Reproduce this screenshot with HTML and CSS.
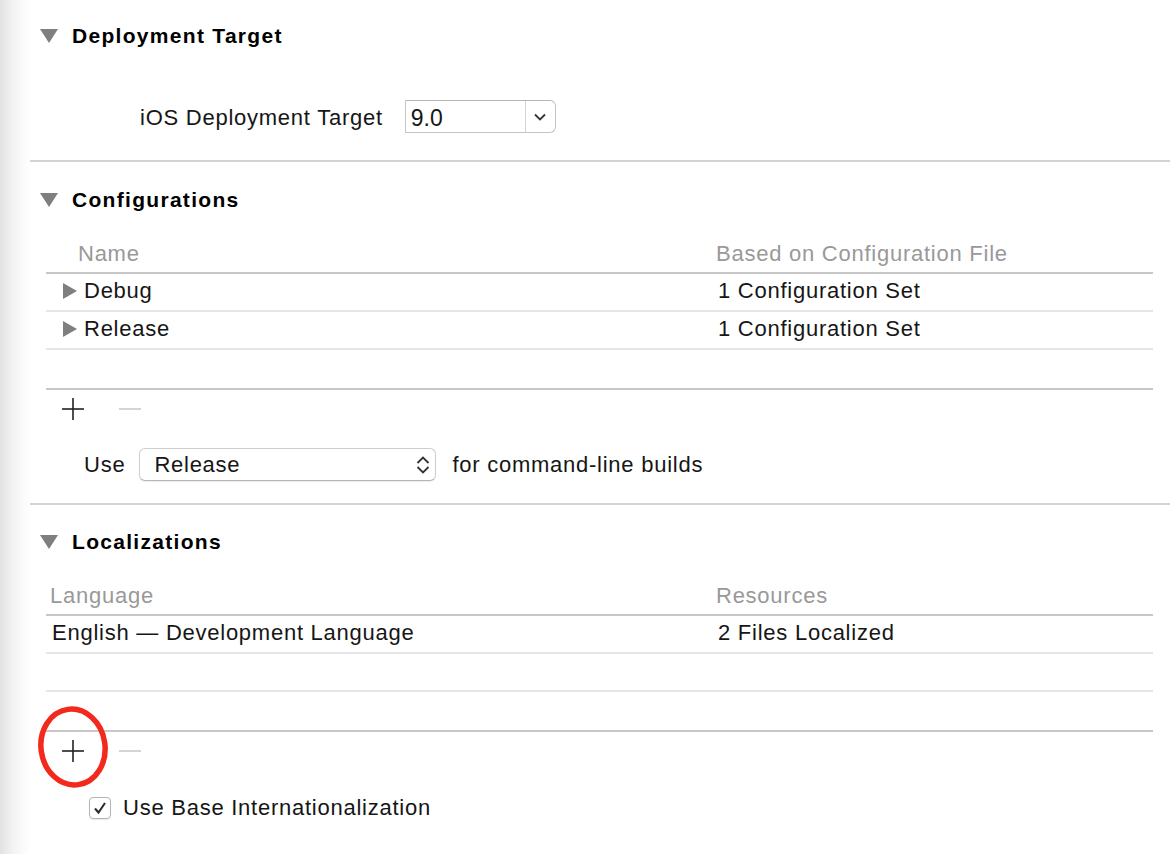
FILE: index.html
```html
<!DOCTYPE html>
<html>

<head>
    <meta charset="utf-8">
    <title>Project Info</title>
    <link rel="stylesheet" href="styles.css">
</head>

<body>
    <div class="page">
        <section class="group group-target">
            <h2 class="group-title">
                <svg class="disclosure" width="18" height="14" viewBox="0 0 18 14"><polygon points="0,0 18,0 9,14" /></svg>
                Deployment Target
            </h2>
            <div class="target-row">
                <span class="field-label">iOS Deployment Target</span>
                <div class="combo">
                    <span class="combo-value">9.0</span>
                    <span class="combo-button">
                        <svg width="12" height="8" viewBox="0 0 12 8"><polyline points="1,1.5 6,6.5 11,1.5" /></svg>
                    </span>
                </div>
            </div>
        </section>

        <section class="group group-configs">
            <h2 class="group-title">
                <svg class="disclosure" width="18" height="14" viewBox="0 0 18 14"><polygon points="0,0 18,0 9,14" /></svg>
                Configurations
            </h2>
            <div class="table">
                <div class="table-head">
                    <span class="col-main col-indent">Name</span>
                    <span class="col-side">Based on Configuration File</span>
                </div>
                <div class="table-row">
                    <span class="col-main col-arrow">
                        <svg class="row-arrow" width="14" height="16" viewBox="0 0 14 16"><polygon points="0,0 14,8 0,16" /></svg>
                        Debug
                    </span>
                    <span class="col-side">1 Configuration Set</span>
                </div>
                <div class="table-row">
                    <span class="col-main col-arrow">
                        <svg class="row-arrow" width="14" height="16" viewBox="0 0 14 16"><polygon points="0,0 14,8 0,16" /></svg>
                        Release
                    </span>
                    <span class="col-side">1 Configuration Set</span>
                </div>
                <div class="table-row table-row-last"></div>
            </div>
            <div class="toolbar">
                <svg class="plus" width="22" height="22" viewBox="0 0 22 22"><line x1="11" y1="0" x2="11" y2="22" /><line x1="0" y1="11" x2="22" y2="11" /></svg>
                <span class="minus"></span>
            </div>
            <div class="use-row">
                <span>Use</span>
                <div class="popup">
                    <span>Release</span>
                    <svg class="updown" width="14" height="18" viewBox="0 0 14 18"><polyline points="1.5,7 7,1.5 12.5,7" /><polyline points="1.5,11 7,16.5 12.5,11" /></svg>
                </div>
                <span>for command-line builds</span>
            </div>
        </section>

        <section class="group group-locales">
            <h2 class="group-title">
                <svg class="disclosure" width="18" height="14" viewBox="0 0 18 14"><polygon points="0,0 18,0 9,14" /></svg>
                Localizations
            </h2>
            <div class="table">
                <div class="table-head">
                    <span class="col-main">Language</span>
                    <span class="col-side">Resources</span>
                </div>
                <div class="table-row">
                    <span class="col-main">English — Development Language</span>
                    <span class="col-side">2 Files Localized</span>
                </div>
                <div class="table-row"></div>
                <div class="table-row table-row-last"></div>
            </div>
            <div class="toolbar">
                <svg class="plus" width="22" height="22" viewBox="0 0 22 22"><line x1="11" y1="0" x2="11" y2="22" /><line x1="0" y1="11" x2="22" y2="11" /></svg>
                <span class="minus"></span>
                <svg class="mark" width="74" height="86" viewBox="0 0 74 86"><ellipse cx="37" cy="43" rx="32" ry="38" transform="rotate(-8 37 43)" /></svg>
            </div>
            <label class="check-row">
                <span class="checkbox">
                    <svg width="16" height="16" viewBox="0 0 16 16"><polyline points="3,8.5 6.5,12.5 13,3" /></svg>
                </span>
                Use Base Internationalization
            </label>
        </section>
    </div>
</body>

</html>
```

FILE: styles.css
```css
body {
    margin: 0;
    min-height: 100vh;
    background: linear-gradient(90deg, #e2e2e2 0, #f2f2f2 12px, #fff 30px);
    color: #161616;
    font-family: "Liberation Sans", Arial, sans-serif;
    font-size: 22px;
    letter-spacing: 0.75px;
}

.page {
    padding: 0 4px 0 30px;
}

.group {
    border-top: 2px solid #d3d3d3;
}

.group-target {
    border-top: none;
    padding: 24px 0 27px;
}

.group-configs {
    padding: 26px 0 22px;
}

.group-locales {
    padding: 25px 0 30px;
}

.group-title {
    display: flex;
    align-items: center;
    margin: 0;
    height: 24px;
    padding-left: 10px;
    font-size: 21px;
    font-weight: bold;
    letter-spacing: 1.3px;
    color: #000;
}

.disclosure {
    fill: #7f7f7f;
    margin-right: 14px;
}

.target-row {
    display: flex;
    align-items: center;
    margin-top: 52px;
    padding-left: 110px;
    height: 33px;
}

.field-label {
    margin-right: 22px;
    padding-top: 3px;
}

.combo {
    display: flex;
    height: 33px;
    box-sizing: border-box;
    width: 151px;
    border: 1px solid #c4c4c4;
    border-top-color: #b4b4b4;
    border-radius: 0 6px 6px 0;
}

.combo-value {
    flex: 1;
    padding-left: 5px;
    line-height: 35px;
    font-size: 23px;
    letter-spacing: 0;
}

.combo-button {
    display: flex;
    align-items: center;
    justify-content: center;
    width: 29px;
    border-left: 1px solid #d4d4d4;
}

.combo-button polyline,
.updown polyline {
    fill: none;
    stroke: #333;
    stroke-width: 1.8;
}

.table {
    margin: 24px 17px 0 16px;
    border-bottom: 2px solid #c8c8c8;
}

.table-head {
    display: flex;
    align-items: center;
    height: 36px;
    border-bottom: 2px solid #c8c8c8;
    color: #999;
}

.table-row {
    display: flex;
    align-items: center;
    height: 34px;
    padding-bottom: 2px;
    border-bottom: 2px solid #e6e6e6;
}

.table-row-last {
    height: 38px;
    padding-bottom: 0;
    border-bottom: none;
}

.col-main {
    display: flex;
    align-items: center;
    width: 666px;
    box-sizing: border-box;
    padding-left: 4px;
}

.table-row .col-main {
    padding-left: 6px;
}

.table-head .col-indent {
    padding-left: 32px;
}

.table-row .col-arrow {
    padding-left: 17px;
}

.row-arrow {
    fill: #7f7f7f;
    margin-right: 7px;
}

.col-side {
    padding-left: 4px;
}

.table-row .col-side {
    padding-left: 6px;
}

.toolbar {
    position: relative;
    display: flex;
    align-items: center;
    height: 38px;
    margin-left: 16px;
    padding-left: 16px;
}

.plus line {
    stroke: #222;
    stroke-width: 1.6;
}

.minus {
    width: 22px;
    height: 2px;
    margin-left: 35px;
    background-color: #d4d4d4;
}

.mark {
    position: absolute;
    left: -10px;
    top: -28px;
}

.mark ellipse {
    fill: none;
    stroke: #f4291d;
    stroke-width: 5.5;
}

.use-row {
    display: flex;
    align-items: center;
    margin-top: 20px;
    padding-left: 54px;
    height: 33px;
}

.popup {
    display: flex;
    align-items: center;
    justify-content: space-between;
    box-sizing: border-box;
    width: 297px;
    height: 33px;
    margin: 0 16px 0 14px;
    padding: 0 5px 0 14px;
    border: 1px solid #cdcdcd;
    border-bottom-color: #b6b6b6;
    border-radius: 6px;
    box-shadow: 0 1px 1px rgba(0, 0, 0, 0.08);
}

.check-row {
    display: flex;
    align-items: center;
    margin-top: 27px;
    padding-left: 59px;
    height: 22px;
}

.checkbox {
    display: flex;
    align-items: center;
    justify-content: center;
    box-sizing: border-box;
    width: 22px;
    height: 22px;
    margin-right: 12px;
    border: 1px solid #b4b4b4;
    border-radius: 4px;
    box-shadow: 0 1px 1px rgba(0, 0, 0, 0.08);
}

.checkbox polyline {
    fill: none;
    stroke: #2a2a2a;
    stroke-width: 2;
}
```
